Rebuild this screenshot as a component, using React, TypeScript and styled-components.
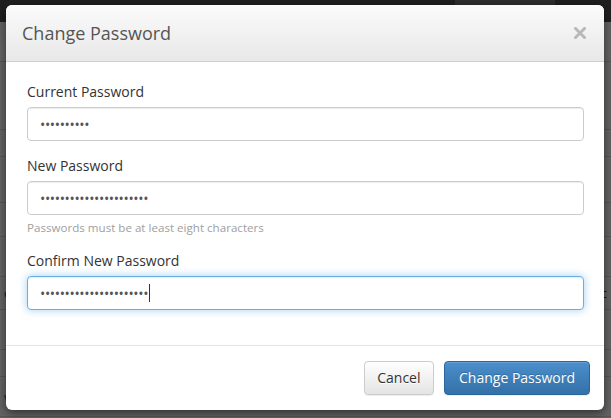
import React from 'react';
import styled, { createGlobalStyle } from 'styled-components';

const GlobalStyle = createGlobalStyle`
    html, body {
        margin: 0;
        padding: 0;
        height: 100%;
    }
    body {
        font-family: 'Open Sans', 'Liberation Sans', sans-serif;
        font-size: 14px;
        color: #333;
        background: #c4c4c4;
        overflow: hidden;
    }
    * {
        box-sizing: border-box;
    }
`;

const backRows = [40, 68, 27, 46, 34, 40, 33, 40, 27, 40];

const Page = styled.div`
    width: 611px;
    height: 418px;
    position: relative;
    overflow: hidden;
`;

const NavBar = styled.div`
    height: 22px;
    background: #3e3e3e;
    display: flex;
    justify-content: flex-end;
    padding-right: 56px;
`;

const NavItem = styled.div`
    width: 100px;
    background: #5a5a5a;
`;

const BackRow = styled.div<{ $h: number }>`
    height: ${(p) => p.$h}px;
    border-bottom: 1px solid #a8a8a8;
    padding: 0 4px;
    display: flex;
    align-items: center;
    justify-content: space-between;
    color: #333;
    font-size: 13px;
`;

const Overlay = styled.div`
    position: absolute;
    inset: 0;
    background: rgba(0, 0, 0, 0.5);
    padding: 5px 0 0 6px;
`;

const Modal = styled.div`
    width: 598px;
    background: #fff;
    border-radius: 6px;
    box-shadow: 0 3px 9px rgba(0, 0, 0, 0.5);
    overflow: hidden;
`;

const Header = styled.div`
    display: flex;
    align-items: center;
    justify-content: space-between;
    padding: 15px 16px 15px 16px;
    background: linear-gradient(to bottom, #fbfbfb 0%, #e8e8e8 100%);
    border-bottom: 1px solid #cfcfcf;
`;

const Title = styled.h4`
    margin: 0;
    font-size: 18px;
    line-height: 26px;
    font-weight: 400;
    color: #555;
`;

const Close = styled.button`
    border: 0;
    background: transparent;
    padding: 0;
    width: 14px;
    height: 14px;
    display: flex;
    align-items: center;
    justify-content: center;
    margin-right: 1px;
    cursor: pointer;
`;

const Body = styled.div`
    padding: 20px 20px 20px 21px;
`;

const Group = styled.div`
    margin-bottom: 15px;
`;

const Label = styled.label`
    display: block;
    font-size: 14px;
    line-height: 20px;
    margin-bottom: 5px;
    color: #333;
`;

const Field = styled.div`
    position: relative;
`;

const Input = styled.input<{ $focused?: boolean }>`
    display: block;
    width: 100%;
    height: 34px;
    padding: 6px 12px;
    font-family: 'Open Sans', 'Liberation Sans', sans-serif;
    font-size: 14px;
    letter-spacing: -0.35px;
    color: #555;
    background: #fff;
    border: 1px solid ${(p) => (p.$focused ? '#66afe9' : '#ccc')};
    border-radius: 4px;
    box-shadow: ${(p) =>
        p.$focused
            ? 'inset 0 1px 1px rgba(0,0,0,.075), 0 0 8px rgba(102,175,233,.6)'
            : 'inset 0 1px 1px rgba(0,0,0,.075)'};
    outline: none;
`;

const Caret = styled.span`
    position: absolute;
    left: 122px;
    top: 8px;
    width: 1px;
    height: 18px;
    background: #333;
`;

const Help = styled.div`
    margin-top: 5px;
    font-size: 11.6px;
    line-height: 16px;
    color: #a0a0a0;
`;

const Footer = styled.div`
    display: flex;
    justify-content: flex-end;
    gap: 10px;
    padding: 15px 14px 15px 15px;
    border-top: 1px solid #e5e5e5;
`;

const Button = styled.button<{ $primary?: boolean }>`
    height: 34px;
    padding: 6px ${(p) => (p.$primary ? '14px' : '12.5px')};
    font-family: 'Open Sans', 'Liberation Sans', sans-serif;
    font-size: 14px;
    line-height: 20px;
    border-radius: 4px;
    cursor: pointer;
    color: ${(p) => (p.$primary ? '#fff' : '#333')};
    border: 1px solid ${(p) => (p.$primary ? '#2b669a' : '#ccc')};
    background: ${(p) =>
        p.$primary
            ? 'linear-gradient(to bottom, #4a8fcc 0%, #3470a8 100%)'
            : 'linear-gradient(to bottom, #fff 0%, #e4e4e4 100%)'};
    text-shadow: ${(p) => (p.$primary ? '0 -1px 0 rgba(0,0,0,.2)' : '0 1px 0 #fff')};
    box-shadow: inset 0 1px 0 rgba(255, 255, 255, 0.15), 0 1px 1px rgba(0, 0, 0, 0.075);
`;

const CloseIcon = () => (
    <svg width="12" height="12" viewBox="0 0 12 12">
        <path d="M1.5 1.5 L10.5 10.5 M10.5 1.5 L1.5 10.5" stroke="#b8b8b8" strokeWidth="3" strokeLinecap="square" />
    </svg>
);

const App = () => {
    return (
        <Page>
            <GlobalStyle />
            <NavBar>
                <NavItem />
            </NavBar>
            {backRows.map((h, i) => (
                <BackRow key={i} $h={h}>
                    <span>{i === 6 ? 'o' : i === 9 ? 'vi' : ''}</span>
                    <span>{i === 6 ? 'sc' : ''}</span>
                </BackRow>
            ))}
            <Overlay>
                <Modal>
                    <Header>
                        <Title>Change Password</Title>
                        <Close aria-label="Close">
                            <CloseIcon />
                        </Close>
                    </Header>
                    <Body>
                        <Group>
                            <Label>Current Password</Label>
                            <Input type="password" value="oldpasswd1" readOnly />
                        </Group>
                        <Group>
                            <Label>New Password</Label>
                            <Input type="password" value="newpassword1234567890!" readOnly />
                            <Help>Passwords must be at least eight characters</Help>
                        </Group>
                        <Group>
                            <Label>Confirm New Password</Label>
                            <Field>
                                <Input $focused type="password" value="newpassword1234567890!" readOnly />
                                <Caret />
                            </Field>
                        </Group>
                    </Body>
                    <Footer>
                        <Button>Cancel</Button>
                        <Button $primary>Change Password</Button>
                    </Footer>
                </Modal>
            </Overlay>
        </Page>
    );
};

export default App;
